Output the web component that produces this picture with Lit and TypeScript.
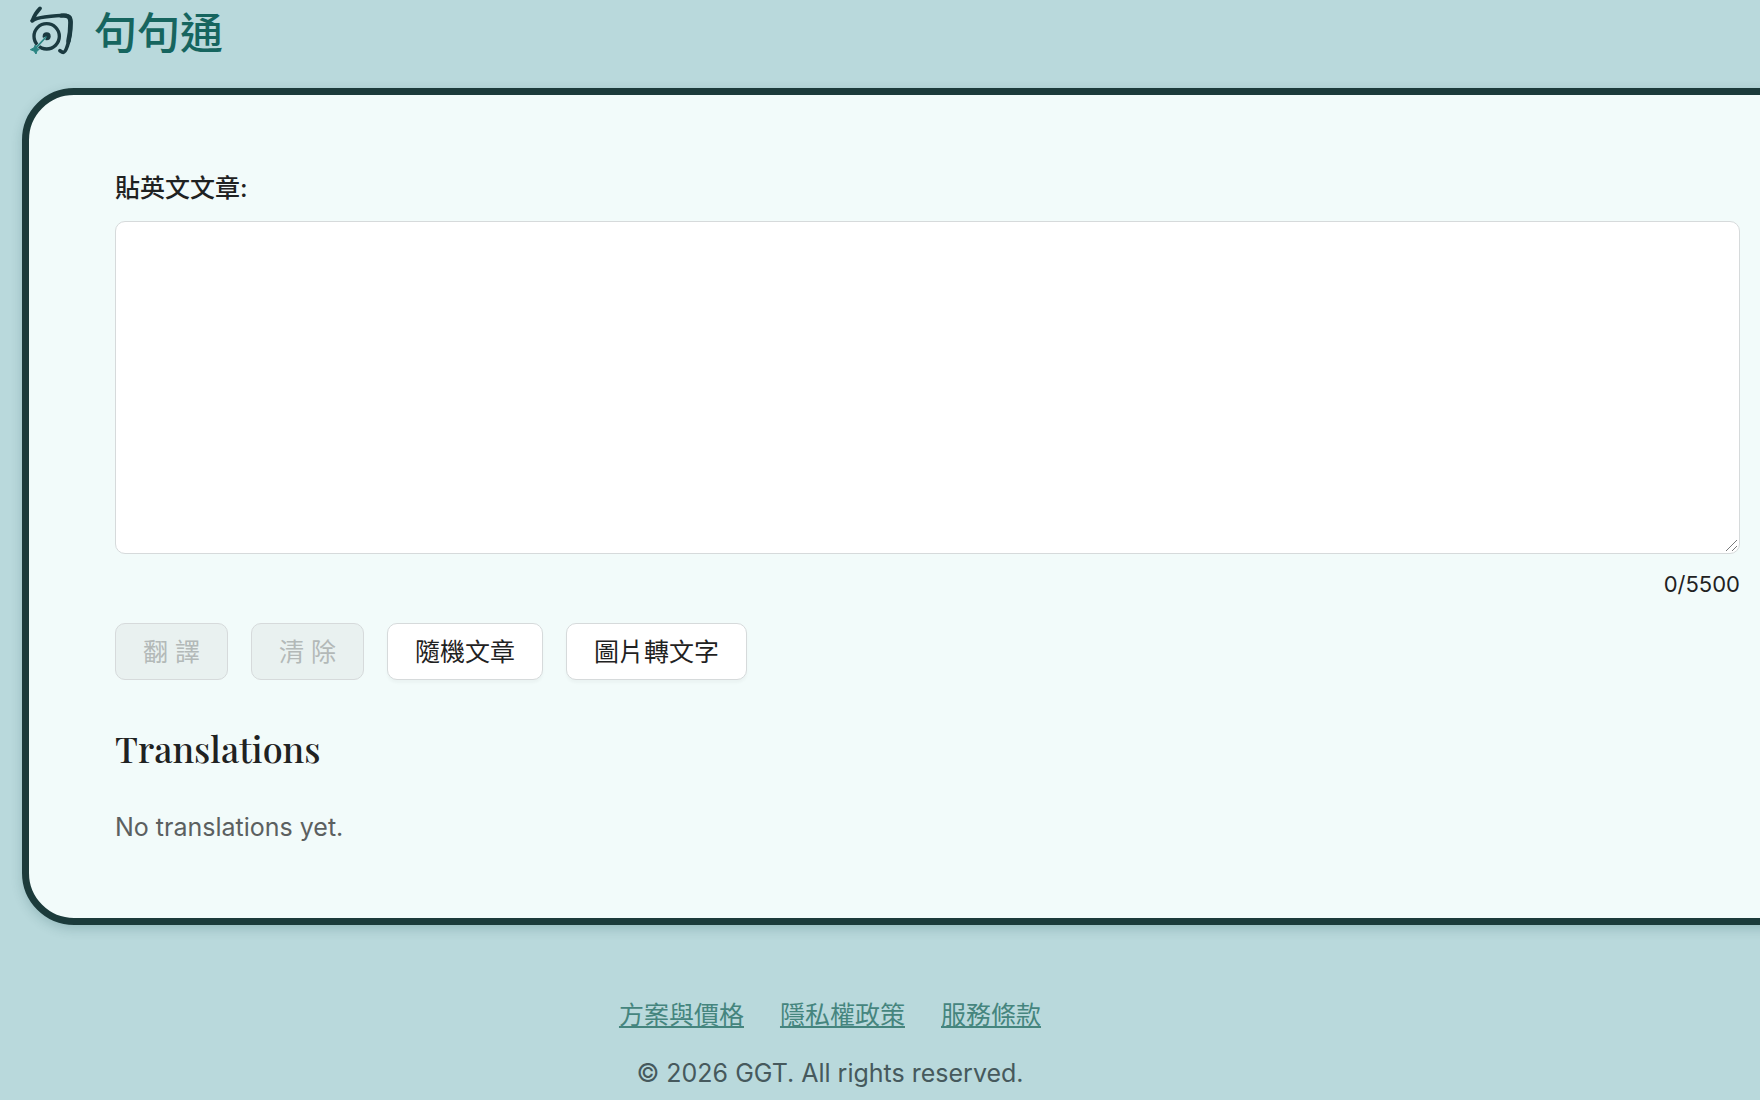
import { LitElement, html, css, svg } from "lit";
import { customElement, state } from "lit/decorators.js";

const MAX_LENGTH = 5500;

const logo = svg`
  <svg class="logo" viewBox="30 9 132 180" aria-hidden="true" fill="none" stroke-linecap="round" stroke-linejoin="round">
    <path d="M60 25C52 33 43 46 37 62" stroke="#1a3a40" stroke-width="11"/>
    <path d="M37 62C46 56 58 53 74 51C98 48 124 45 138 46C150 48 154 53 153 68C153 90 149 118 142 138C138 150 134 157 130 157C127 157 124 155 120 152" stroke="#1a3a40" stroke-width="11"/>
    <path d="M124 47C144 45 152 50 151 68C151 88 149 108 145 124" stroke="#1a3a40" stroke-width="13"/>
    <circle cx="80" cy="109" r="38" stroke="#1a3a40" stroke-width="10"/>
    <circle cx="80" cy="109" r="12" fill="#1a3a40"/>
    <path d="M74 115L46 146" stroke="#b9d9dc" stroke-width="8"/>
    <path d="M78 111L46 146" stroke="#2b8583" stroke-width="5"/>
    <path d="M46 136L49 145L58 148L51 153L48 162L42 153L31 149L41 144Z" fill="#2b8583" stroke="#2b8583" stroke-width="3"/>
  </svg>
`;

@customElement("app-root")
export class AppRoot extends LitElement {
  @state() private text = "";

  static styles = css`
    :host {
      display: block;
      box-sizing: border-box;
      min-height: 100vh;
      overflow: hidden;
      background: #b9d9dc;
      color: #1f2222;
      font-family: Inter, "Noto Sans CJK TC", sans-serif;
      font-size: 25px;
      line-height: 40px;
    }
    .header {
      display: flex;
      align-items: center;
      gap: 20px;
      height: 88px;
      padding: 0 30px 22px;
      box-sizing: border-box;
    }
    .logo {
      width: 44px;
      height: 60px;
    }
    .brand {
      color: #16655f;
      font-size: 43px;
      font-weight: 500;
      line-height: 60px;
      text-decoration: none;
    }
    /* The panel is wider than the viewport and runs off its right edge. */
    .card {
      margin: 0 -73px 0 22px;
      padding: 73px 86px 71px;
      border: 7px solid #1c3b3b;
      border-radius: 52px;
      background: #f2fbfa;
      box-shadow: 0 4px 12px rgba(20, 70, 75, 0.2);
    }
    .label {
      display: block;
      margin-bottom: 13px;
      font-weight: 500;
    }
    .input {
      display: block;
      box-sizing: border-box;
      width: 100%;
      height: 333px;
      padding: 12px 16px;
      border: 1px solid #d6dadb;
      border-radius: 10px;
      background: #fff;
      color: inherit;
      font: inherit;
      outline: none;
      resize: vertical;
    }
    .input::-webkit-resizer {
      background: linear-gradient(
          135deg,
          transparent 0 46%,
          #77797a 46% 54%,
          transparent 54% 73%,
          #77797a 73% 81%,
          transparent 81%
        )
        2px 2px / 11px 11px no-repeat;
    }
    .counter {
      margin-top: 14px;
      font-size: 22px;
      line-height: 32px;
      text-align: right;
    }
    .actions {
      display: flex;
      flex-wrap: wrap;
      gap: 23px;
      margin-top: 23px;
    }
    .button {
      height: 57px;
      padding: 0 27px;
      border: 1px solid #d6dadb;
      border-radius: 10px;
      background: #fff;
      box-shadow: 0 3px 3px rgba(0, 0, 0, 0.03);
      color: #1f2222;
      font: inherit;
      cursor: pointer;
    }
    .button:disabled {
      background: #e9f1f0;
      box-shadow: none;
      color: #b3b9b8;
      cursor: not-allowed;
    }
    .heading {
      margin: 43px 0 34px;
      font-family: "Playfair Display", "Liberation Serif", serif;
      font-size: 36px;
      font-weight: 500;
      line-height: 50px;
    }
    .empty {
      margin: 0;
      color: #5b6060;
    }
    .footer {
      padding: 70px 100px 7px 0;
      text-align: center;
    }
    .links {
      display: flex;
      justify-content: center;
      gap: 36px;
    }
    .link {
      color: #45857e;
      text-decoration: underline;
      text-decoration-thickness: 2px;
      text-underline-offset: 2px;
      text-decoration-skip-ink: none;
    }
    .copyright {
      margin: 18px 0 0;
      color: #46595d;
    }
  `;

  private onInput(event: Event) {
    this.text = (event.target as HTMLTextAreaElement).value;
  }

  private clear() {
    this.text = "";
  }

  render() {
    const empty = this.text.length === 0;
    return html`
      <header class="header">
        ${logo}
        <a class="brand" href="#">句句通</a>
      </header>
      <main class="card">
        <label class="label" for="article">貼英文文章:</label>
        <textarea
          class="input"
          id="article"
          maxlength=${MAX_LENGTH}
          .value=${this.text}
          @input=${this.onInput}
        ></textarea>
        <div class="counter">${this.text.length}/${MAX_LENGTH}</div>
        <div class="actions">
          <button class="button" type="button" ?disabled=${empty}>翻 譯</button>
          <button class="button" type="button" ?disabled=${empty} @click=${this.clear}>清 除</button>
          <button class="button" type="button">隨機文章</button>
          <button class="button" type="button">圖片轉文字</button>
        </div>
        <h2 class="heading">Translations</h2>
        <p class="empty">No translations yet.</p>
      </main>
      <footer class="footer">
        <nav class="links">
          <a class="link" href="#pricing">方案與價格</a>
          <a class="link" href="#privacy">隱私權政策</a>
          <a class="link" href="#terms">服務條款</a>
        </nav>
        <p class="copyright">© 2026 GGT. All rights reserved.</p>
      </footer>
    `;
  }
}
